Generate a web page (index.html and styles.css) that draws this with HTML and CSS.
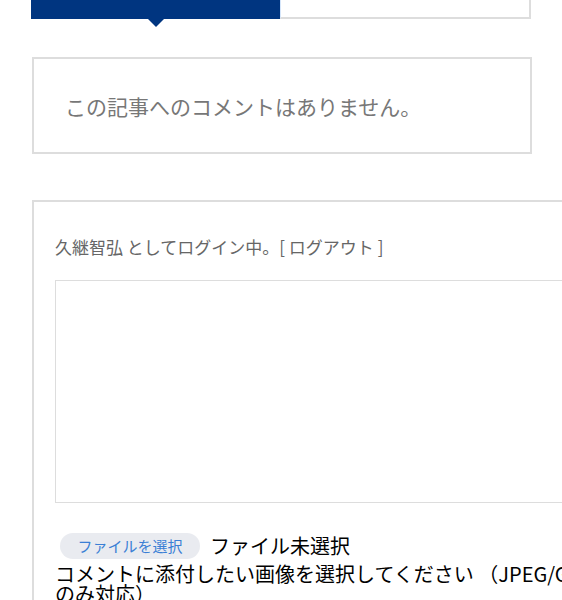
FILE: index.html
```html
<!DOCTYPE html>
<html>
<head>
    <title>コメント</title>
    <link rel="stylesheet" href="styles.css">
</head>
<body>
    <div class="page">
        <div class="tabs">
            <div class="tab tab-active"></div>
            <div class="tab"></div>
        </div>

        <div class="no-comments">この記事へのコメントはありません。</div>

        <div class="comment-form">
            <p class="logged-in">久継智弘 としてログイン中。[ ログアウト ]</p>
            <textarea class="comment-text"></textarea>
            <div class="file-row">
                <span class="file-btn">ファイルを選択</span>
                <span class="file-name">ファイル未選択</span>
            </div>
            <p class="file-note">コメントに添付したい画像を選択してください （JPEG/GIF/PNG のみ対応）</p>
        </div>
    </div>
</body>
</html>
```

FILE: styles.css
```css
html, body {
    margin: 0;
    overflow: hidden;
    background-color: #ffffff;
}

body {
    font-family: "Noto Sans CJK JP", "Noto Sans", sans-serif;
    color: #000000;
}

.page {
    padding-left: 31px;
    width: 720px;
}

.tabs {
    display: flex;
    width: 500px;
    height: 19px;
}

.tab {
    flex: 1;
    background-color: #ffffff;
    border-right: 2px solid #dddddd;
    border-bottom: 2px solid #dddddd;
    border-left: 1px solid #d6e6fa;
}

.tab-active {
    position: relative;
    background-color: #003580;
    border: none;
}

/* little arrow under the selected tab */
.tab-active::after {
    content: "";
    position: absolute;
    left: 117px;
    top: 19px;
    border-left: 8px solid transparent;
    border-right: 8px solid transparent;
    border-top: 8px solid #003580;
}

.no-comments {
    margin-top: 38px;
    margin-left: 1px;
    width: 465px;
    height: 93px;
    border: 2px solid #dddddd;
    padding-left: 31px;
    display: flex;
    align-items: center;
    font-size: 21px;
    color: #777777;
}

.comment-form {
    margin-top: 46px;
    margin-left: 1px;
    width: 592px;
    border: 2px solid #dddddd;
    padding: 33px 22px 60px 21px;
}

.logged-in {
    margin: 0;
    font-size: 17px;
    line-height: 24px;
    color: #666666;
}

.comment-text {
    display: block;
    box-sizing: border-box;
    width: 100%;
    height: 223px;
    margin-top: 21px;
    border: 1px solid #dddddd;
    resize: none;
}

.file-row {
    display: flex;
    align-items: center;
    margin-top: 28px;
    margin-left: 5px;
}

.file-btn {
    width: 140px;
    height: 26px;
    border-radius: 13px;
    background-color: #e9ebf0;
    color: #3a7fd5;
    font-size: 15px;
    display: flex;
    align-items: center;
    justify-content: center;
}

.file-name {
    margin-left: 10px;
    font-size: 20px;
}

.file-note {
    margin: 4px 0 0;
    font-size: 20px;
    line-height: 20px;
}
```
